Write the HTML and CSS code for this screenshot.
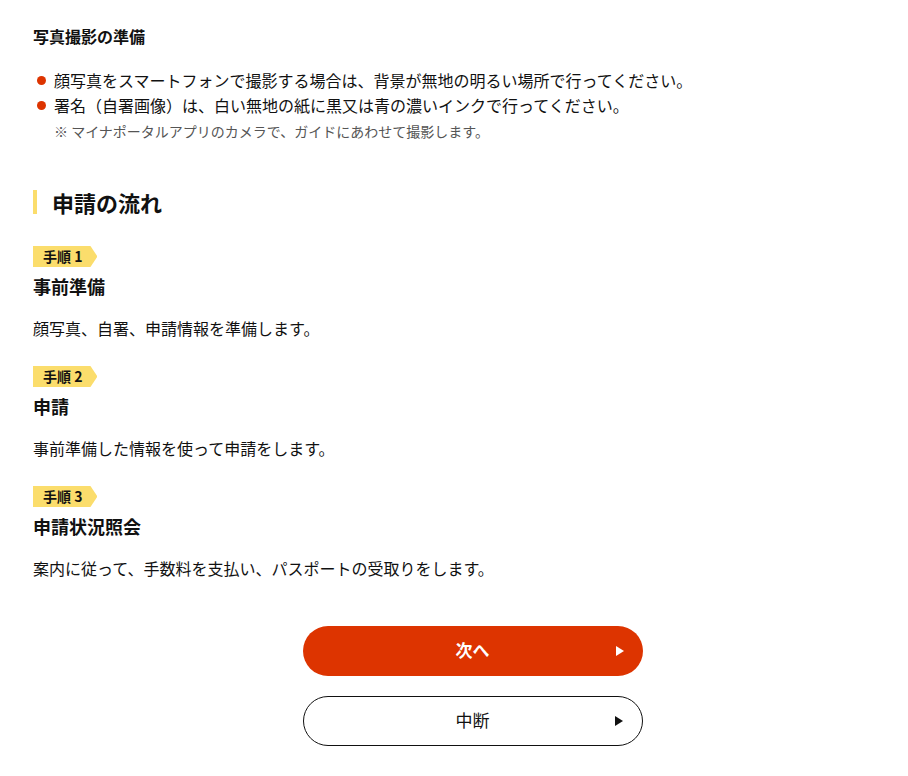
FILE: index.html
```html
<!DOCTYPE html>
<html lang="ja">
<head>
    <meta charset="UTF-8">
    <meta name="viewport" content="width=device-width, initial-scale=1.0">
    <title>申請の流れ</title>
    <link rel="stylesheet" href="styles.css">
</head>
<body>
    <div class="page">
        <h3 class="sub-title">写真撮影の準備</h3>
        <ul class="dot-list">
            <li>顔写真をスマートフォンで撮影する場合は、背景が無地の明るい場所で行ってください。</li>
            <li>署名（自署画像）は、白い無地の紙に黒又は青の濃いインクで行ってください。</li>
        </ul>
        <p class="note">※ マイナポータルアプリのカメラで、ガイドにあわせて撮影します。</p>

        <h2 class="section-title">申請の流れ</h2>

        <div class="step">
            <span class="step-badge">手順 1</span>
            <h4 class="step-title">事前準備</h4>
            <p class="step-text">顔写真、自署、申請情報を準備します。</p>
        </div>
        <div class="step">
            <span class="step-badge">手順 2</span>
            <h4 class="step-title">申請</h4>
            <p class="step-text">事前準備した情報を使って申請をします。</p>
        </div>
        <div class="step">
            <span class="step-badge">手順 3</span>
            <h4 class="step-title">申請状況照会</h4>
            <p class="step-text">案内に従って、手数料を支払い、パスポートの受取りをします。</p>
        </div>

        <div class="actions">
            <button class="btn btn-primary">次へ<span class="arrow"></span></button>
            <button class="btn btn-outline">中断<span class="arrow"></span></button>
        </div>
    </div>
</body>
</html>
```

FILE: styles.css
```css
body{
    margin: 0;
    font-family: "Noto Sans CJK JP", "Noto Sans", sans-serif;
    color: #111;
    background: #fff;
}
.page{
    padding: 24px 33px 30px;
}
.sub-title{
    margin: 0;
    font-size: 16px;
    line-height: 24px;
    font-weight: bold;
}
.dot-list{
    list-style: none;
    margin: 20px 0 0;
    padding: 0;
}
.dot-list li{
    position: relative;
    padding-left: 21px;
    font-size: 16px;
    line-height: 25px;
}
.dot-list li::before{
    content: "";
    position: absolute;
    left: 4px;
    top: 8px;
    width: 9px;
    height: 9px;
    border-radius: 50%;
    background-color: #dd3400;
}
.note{
    margin: 2px 0 0 21px;
    font-size: 14px;
    line-height: 22px;
    color: #555;
}
.section-title{
    margin: 48px 0 0;
    padding-left: 15px;
    border-left: 4px solid #fbdd6c;
    font-size: 22px;
    line-height: 24px;
    font-weight: bold;
}
.step{
    margin-top: 32px;
}
.step + .step{
    margin-top: 26px;
}
.step-badge{
    display: block;
    width: fit-content;
    height: 21px;
    padding: 0 15px 0 10px;
    font-size: 14px;
    line-height: 21px;
    font-weight: bold;
    background-color: #fbdd6c;
    clip-path: polygon(0 0, calc(100% - 7px) 0, 100% 50%, calc(100% - 7px) 100%, 0 100%);
}
.step-title{
    margin: 5px 0 0;
    font-size: 18px;
    line-height: 28px;
    font-weight: bold;
}
.step-text{
    margin: 16px 0 0;
    font-size: 16px;
    line-height: 24px;
}
.actions{
    display: flex;
    flex-direction: column;
    align-items: center;
    gap: 20px;
    margin-top: 46px;
    padding-left: 37px;
}
.btn{
    position: relative;
    width: 340px;
    height: 50px;
    padding: 0 0 3px;
    border-radius: 25px;
    font-family: inherit;
    font-size: 17px;
    cursor: pointer;
}
.btn-primary{
    background-color: #dd3400;
    border: none;
    color: #fff;
    font-weight: bold;
}
.btn-outline{
    background-color: #fff;
    border: 1px solid #111;
    color: #111;
}
.arrow{
    position: absolute;
    right: 19px;
    top: 50%;
    margin-top: -5px;
    border-left: 8px solid currentColor;
    border-top: 5px solid transparent;
    border-bottom: 5px solid transparent;
}
```
